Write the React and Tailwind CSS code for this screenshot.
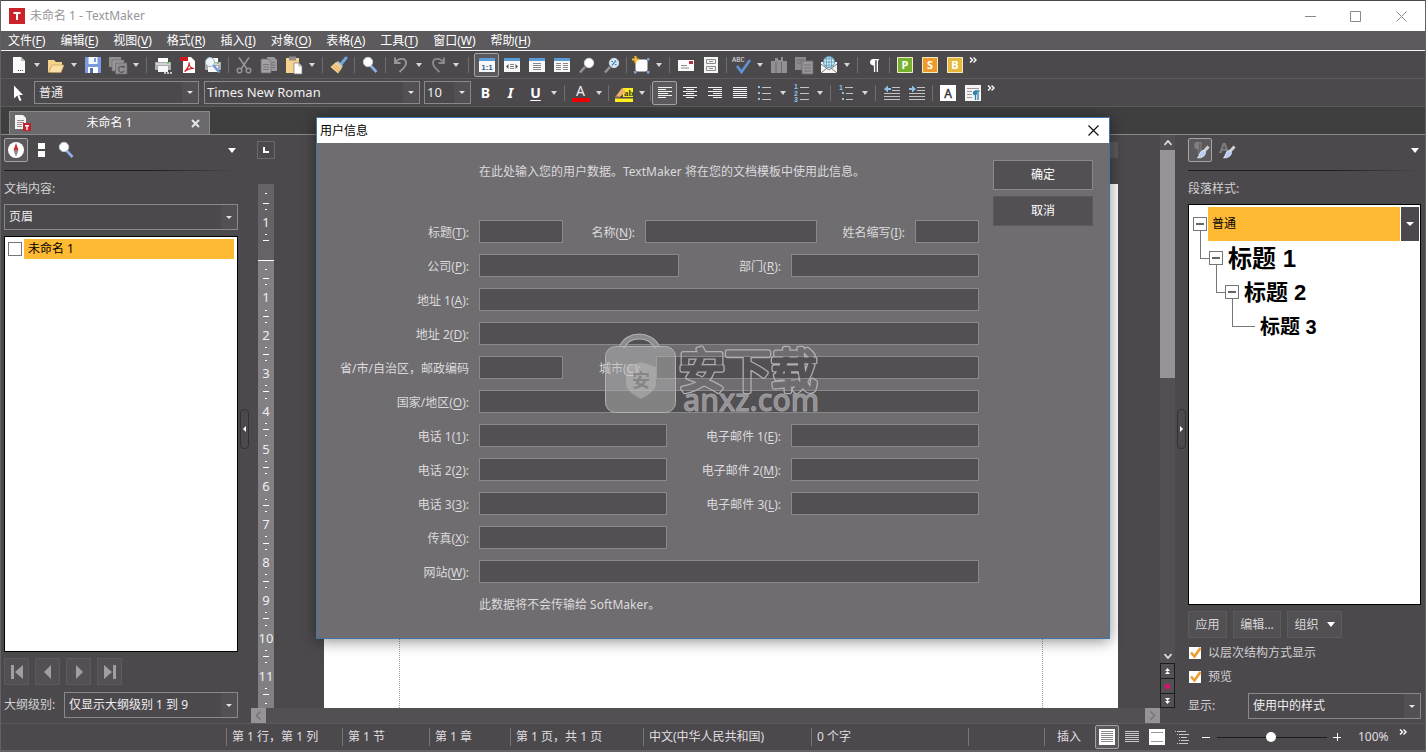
import React from "react";

/* ---------- shared pieces ---------- */

function Svg({ children, w = 20, h = 20, className = "" }) {
  return (
    <svg width={w} height={h} viewBox={`0 0 ${w} ${h}`} fill="none" className={className} aria-hidden="true">
      {children}
    </svg>
  );
}

function Mnemonic({ text }) {
  const m = text.match(/^(.*\()(\w)(\).*)$/);
  if (!m) return text;
  return (
    <>
      {m[1]}
      <span className="underline underline-offset-2">{m[2]}</span>
      {m[3]}
    </>
  );
}

function Tool({ label, active, children }) {
  return (
    <button
      type="button"
      aria-label={label}
      className={
        "flex h-6 w-[25px] shrink-0 items-center justify-center " +
        (active ? "rounded-xs border border-[#a5a3a5] bg-[#5b595c]" : "")
      }
    >
      {children}
    </button>
  );
}

function Caret() {
  return (
    <Svg w={6} h={4}>
      <path d="M0 0h6L3 4z" fill="#d8d6d8" />
    </Svg>
  );
}

function DropArrow({ label = "更多选项" }) {
  return (
    <button type="button" aria-label={label} className="flex h-6 w-3 shrink-0 items-center justify-center">
      <Caret />
    </button>
  );
}

function Sep({ wide, xl, thin }) {
  return (
    <span
      className={
        "flex h-4 shrink-0 justify-center " + (xl ? "w-3" : wide ? "w-2" : thin ? "w-1" : "w-1.5")
      }
    >
      <span className="w-px bg-[#6e6c6f]" />
    </span>
  );
}

function Select({ label, id, options, className = "", size = "text-xs", pad = "pl-1" }) {
  return (
    <span className={"relative flex " + className}>
      <select
        id={id}
        aria-label={label}
        className={
          "h-full w-full appearance-none border border-[#8a888b] bg-[#4b494c] pr-5 text-[#f0eef0] outline-none " +
          size + " " + pad
        }
      >
        {options.map((o) => (
          <option key={o}>{o}</option>
        ))}
      </select>
      <span className="pointer-events-none absolute inset-y-px right-px flex w-4 items-center justify-center bg-[#525053]">
        <Svg w={6} h={3}>
          <path d="M0 0h6L3 3z" fill="#e4e2e4" />
        </Svg>
      </span>
    </span>
  );
}

function More() {
  return (
    <button type="button" aria-label="更多按钮" className="flex h-4 w-3 shrink-0 items-start justify-center">
      <Svg w={8} h={7}>
        <path d="M1 .5 3.500 3 1 5.500M4.500 .5 7 3 4.500 5.500" stroke="#fff" strokeWidth="1.400" />
      </Svg>
    </button>
  );
}

/* ---------- icons ---------- */

const IconNew = () => (
  <Svg>
    <path d="M4 2h8l4 4v12H4z" fill="#fafafa" />
    <path d="M12 2v4h4z" fill="#b9b9bb" />
    <path d="M9 15.500h1M11 15.500h1M13 15.500h1" stroke="#444" />
  </Svg>
);
const IconOpen = () => (
  <Svg>
    <path d="M2 5h6l2 2h6v3H6l-3 7H2z" fill="#f7d28b" />
    <path d="M6 10h12l-3 7.500H2.500z" fill="#fbdfa8" stroke="#c79a49" strokeWidth=".6" />
  </Svg>
);
const IconSave = () => (
  <Svg>
    <path d="M2 2h16v16H2z" fill="#7a9be0" />
    <path d="M5.500 2h9v7h-9z" fill="#f4f6fb" />
    <path d="M5 12h10v6H5z" fill="#fff" />
    <path d="M7 13h3v5H7z" fill="#4d6eb5" />
    <path d="M11 3h2v4h-2z" fill="#7a9be0" />
  </Svg>
);
const IconSaveAll = () => (
  <Svg>
    <path d="M1 2h12v10H1z" fill="#918f92" />
    <path d="M4 5h12v11H4z" fill="#9a989b" stroke="#6b696c" strokeWidth=".7" />
    <path d="M7.500 8h11.500v11H7.500z" fill="#918f92" stroke="#6b696c" strokeWidth=".7" />
    <path d="M15.500 12a3 3 0 1 0 .8 3.500M16 10.500v2h-2" stroke="#5c5a5d" strokeWidth="1.200" />
  </Svg>
);
const Printer = () => (
  <>
    <path d="M5 3h10v5H5z" fill="#fff" />
    <path d="M2 7h16v8H2z" fill="#a9adb0" />
    <path d="M3 9h14" stroke="#dfe2e4" strokeWidth="1.500" />
    <path d="M5 11h10v6H5z" fill="#f7f7f7" />
    <path d="M14 8h2" stroke="#5cc64f" strokeWidth="1.500" />
  </>
);
const IconPrint = () => (
  <Svg>
    <Printer />
    <path d="M11 18h2M14 18h2M17 18h2" stroke="#eee" strokeWidth="1.500" />
  </Svg>
);
const IconPdf = () => (
  <Svg>
    <path d="M5 2h8l4 4v12H5z" fill="#fff" />
    <path d="M2 2h8v4H2z" fill="#d3191f" />
    <path d="M6.500 16.500c3-2 5-7 4.500-9 0 4 2.500 6 5 6-4-.5-6.500.5-9.500 3z" stroke="#d3191f" strokeWidth="1.200" />
  </Svg>
);
const IconPreview = () => (
  <Svg>
    <Printer />
    <circle cx="7" cy="7" r="4.500" fill="#eef5fb" stroke="#9ab0c4" />
    <path d="m10.500 10.500 6 7" stroke="#6a9bd6" strokeWidth="2.500" />
  </Svg>
);
const IconCut = () => (
  <Svg>
    <path d="M5 2.500 13 14M15 2.500 7 14" stroke="#969496" strokeWidth="1.600" />
    <circle cx="5.500" cy="15.500" r="2.300" stroke="#969496" strokeWidth="1.500" />
    <circle cx="14.500" cy="15.500" r="2.300" stroke="#969496" strokeWidth="1.500" />
  </Svg>
);
const IconCopy = () => (
  <Svg>
    <path d="M8 2h7l3 3v11H8z" fill="#99979a" />
    <path d="M2 4h7l3 3v11H2z" fill="#a3a1a4" stroke="#6b696c" strokeWidth=".8" />
    <path d="M4 9.500h6M4 12h6M4 14.500h6M13 7.500h3M13 10h3M13 12.500h3" stroke="#6b696c" strokeWidth=".8" />
  </Svg>
);
const IconPaste = () => (
  <Svg>
    <path d="M2 3h13v15H2z" fill="#f6d28e" />
    <path d="M5 1.500h7v4H5z" fill="#8f8d90" />
    <path d="M10 8h5l3 3v8h-8z" fill="#fff" stroke="#77757a" strokeWidth=".7" />
    <path d="M15 8v3h3" stroke="#999" />
  </Svg>
);
const IconBrush = () => (
  <Svg>
    <path d="m17 3-4.500 5.500" stroke="#6fa8dc" strokeWidth="3" strokeLinecap="round" />
    <path d="m9 6 5 5-1.500 2-5.500-5.500z" fill="#c3c6c9" />
    <path d="M7 7 13 13 9 18.500 1.500 12z" fill="#f6cf92" />
    <path d="m4 11 6 6M6 9.500l5 5.500" stroke="#d99b42" strokeWidth=".8" />
  </Svg>
);
const IconZoom = () => (
  <Svg>
    <path d="m10.500 10.500 6 6.500" stroke="#8fb0e6" strokeWidth="2.600" />
    <circle cx="8" cy="7" r="4.700" fill="#fbfdff" stroke="#c6cbd2" />
  </Svg>
);
const IconUndo = () => (
  <Svg>
    <path d="M4 2.500v5.500h5.500" stroke="#99979a" strokeWidth="1.900" />
    <path d="M4.500 7.500C8 2 15.500 3 15 8.500c-.3 3.500-3.500 5.500-6.500 8.500" stroke="#99979a" strokeWidth="1.900" />
  </Svg>
);
const IconRedo = () => (
  <Svg>
    <path d="M16 2.500v5.500h-5.500" stroke="#8b898c" strokeWidth="1.900" />
    <path d="M15.500 7.500C12 2 4.500 3 5 8.500c.3 3.500 3 5 6.500 8.500" stroke="#8b898c" strokeWidth="1.900" />
  </Svg>
);
const ViewFrame = ({ children }) => (
  <Svg w={16} h={16}>
    <path d="M0 1h16v14H0z" fill="#f8f8f9" />
    <path d="M0 1h16v3H0z" fill="#5b9bd8" />
    {children}
  </Svg>
);
const IconZoomAlt = ({ pct }) => (
  <Svg>
    <path d="m8 12-5 5.500" stroke="#98969a" strokeWidth="2.400" />
    <circle cx="12" cy="8" r="4.700" fill={pct ? "#cfe6f4" : "#fff"} stroke="#d6d6d8" />
    {pct && <path d="m14 5.500-4 5M9.500 6.500H11M13 9.500h1.500" stroke="#3173a8" strokeWidth="1.200" />}
  </Svg>
);
const IconShape = () => (
  <Svg>
    <rect x="4.500" y="4.500" width="12" height="12" rx="2" fill="#fff" />
    <path d="M3 16h2.500v2.500H3zM16 16h2.500v2.500H16zM16 3h2.500v2.500H16z" fill="#7fa6d8" />
    <path d="M4.500 1v7M1 4.500h7" stroke="#f5b932" strokeWidth="2.200" />
  </Svg>
);
const IconEnvelope = () => (
  <Svg>
    <path d="M2 5h16v11H2z" fill="#fbfbfb" />
    <path d="M13 6h4v3h-4z" fill="#bb3340" />
    <path d="M5 10.500h6M5 13h8" stroke="#8b898c" />
  </Svg>
);
const IconFields = () => (
  <Svg>
    <path d="M3 2h14v16H3z" fill="#f5f5f6" />
    <path d="M5.500 4.500h9v4h-9zM5.500 11.500h9v4h-9z" stroke="#8b898c" />
    <path d="M8 6.500h4M8 13.500h4" stroke="#8b898c" />
  </Svg>
);
const IconSpell = () => (
  <Svg w={22}>
    <text x="1" y="7" fontSize="7" fill="#e4e2e4" fontFamily="Liberation Mono, monospace">ABC</text>
    <path d="m6 11 4.500 6L19 5" stroke="#5f93d6" strokeWidth="2.600" />
  </Svg>
);
const IconThesaurus = () => (
  <Svg>
    <path d="M2 6h4V3h3v2h3V2h2v4h4v12H2z" fill="#929093" />
    <path d="M7 7v11M12.500 7v11" stroke="#6b696c" />
  </Svg>
);
const IconCompare = () => (
  <Svg>
    <path d="M1 2h11v13H1z" fill="#8b898c" />
    <path d="M8 6h11v13H8z" fill="#98969a" stroke="#6b696c" strokeWidth=".8" />
    <path d="M3 5h7M3 8h4M10 10h7M10 13h7M10 16h7" stroke="#6b696c" strokeWidth=".8" />
  </Svg>
);
const IconWeb = () => (
  <Svg>
    <path d="M2 7h16v11H2z" fill="#f6f6f7" />
    <path d="m2 9 8 6 8-6M2 18l6-5M18 18l-6-5" stroke="#777" />
    <circle cx="10" cy="7" r="5.500" fill="#d9eefb" stroke="#5b9bb8" />
    <path d="M10 1.500v11M4.500 7h11M6 3.800h8M6 10.200h8M7.500 2v10M12.500 2v10" stroke="#5b9bb8" strokeWidth=".8" />
  </Svg>
);
const IconMark = ({ letter, from, to }) => (
  <Svg w={16} h={16}>
    <path d="M0 0h16v16H0z" fill={to} />
    <path d="M.5.5h15v15H.5z" fill={from} stroke="#f2ecc9" />
    <text x="8" y="12" textAnchor="middle" fontSize="11" fontWeight="700" fill="#fff" fontFamily="Noto Sans, sans-serif">
      {letter}
    </text>
  </Svg>
);
const Lines = ({ rows, color = "#f4f4f5" }) => (
  <Svg w={14} h={14}>
    {rows.map(([a, b], i) => (
      <path key={i} d={`M${a} ${i * 2 + 1.5}H${b}`} stroke={color} />
    ))}
  </Svg>
);
const IconBullets = () => (
  <Svg>
    <path d="M3 3h2v2H3zM3 9h2v2H3zM3 15h2v2H3z" fill="#8cc3ea" />
    <path d="M7 4.500h9M7 10.500h9M7 16.500h9" stroke="#c4c2c5" />
  </Svg>
);
const IconNumbers = () => (
  <Svg>
    <text fontSize="7" fontWeight="700" fill="#8cc3ea" fontFamily="Liberation Sans, sans-serif">
      <tspan x="2" y="6">1</tspan>
      <tspan x="2" y="12.500">2</tspan>
      <tspan x="2" y="19">3</tspan>
    </text>
    <path d="M8 4.500h9M8 10.500h9M8 16.500h9" stroke="#c4c2c5" />
  </Svg>
);
const IconOutline = () => (
  <Svg>
    <text x="2" y="7" fontSize="7" fontWeight="700" fill="#8cc3ea" fontFamily="Liberation Sans, sans-serif">1</text>
    <path d="M5 9h2v2H5zM5 15h2v2H5z" fill="#8cc3ea" />
    <path d="M8 4.500h8M9 10.500h7M9 16.500h7" stroke="#c4c2c5" />
  </Svg>
);
const IconIndent = ({ right }) => (
  <Svg w={16} h={16}>
    <path d="M8 2.500h8M8 5.500h8M0 8.500h16M0 11.500h16M0 14.500h16" stroke="#c4c2c5" />
    {right ? <path d="M0 3h3V.5L7 4 3 7.500V5H0z" fill="#8cc3ea" /> : <path d="M7 3H4V.5L0 4l4 3.500V5h3z" fill="#8cc3ea" />}
  </Svg>
);
const IconFontBox = () => (
  <Svg w={16} h={16}>
    <path d="M0 0h16v16H0z" fill="#fff" />
    <text x="8" y="12.500" textAnchor="middle" fontSize="12" fill="#333" stroke="#333" strokeWidth=".4" fontFamily="Noto Sans, sans-serif">A</text>
  </Svg>
);
const IconParaBox = () => (
  <Svg w={16} h={16}>
    <path d="M0 0h16v16H0z" fill="#f4f4f5" />
    <path d="M2 3.500h12M2 6.500h5M2 9.500h5M2 12.500h5" stroke="#9a989b" />
    <path d="M10.500 6v9M13 6v9M14.500 6H10" stroke="#2f7fb0" strokeWidth="1.300" />
    <circle cx="10" cy="8" r="2.200" fill="#2f7fb0" />
  </Svg>
);
const IconStyleBrush = ({ char }) => (
  <Svg>
    <text x="8" y="13" textAnchor="middle" fontSize="14" fontWeight="700" fill="#7f7d80" fontFamily="Noto Sans, sans-serif">{char}</text>
    <path d="m18.500 6.500-5.500 6" stroke="#cfd1d4" strokeWidth="3" />
    <path d="M12.500 10.500c2 0 3 1 3 3-1 3-4 4.500-8 4.500 2-2 2-6.500 5-7.500z" fill="#b9cdf3" stroke="#eef3fc" strokeWidth=".7" />
  </Svg>
);

/* ---------- top of the window ---------- */

function TitleBar() {
  return (
    <header className="flex h-[31px] shrink-0 items-center border-t border-[#4a484b] bg-white pl-2 text-[#979597]">
      <span className="flex size-4 items-center justify-center bg-[#cc2229]">
        <Svg w={16} h={16}>
          <path d="M4.500 4h7v2H9v6H7V6H4.500z" fill="#fff" />
        </Svg>
      </span>
      <h1 className="ml-[5px] flex-1 text-xs">未命名 1 - TextMaker</h1>
      <button type="button" aria-label="最小化" className="flex h-full w-[45px] items-center justify-center">
        <Svg w={11} h={11}><path d="M0 5.500h11" stroke="#8a8a8a" /></Svg>
      </button>
      <button type="button" aria-label="最大化" className="flex h-full w-[45px] items-center justify-center">
        <Svg w={11} h={11}><path d="M.5.5h10v10H.5z" stroke="#8a8a8a" /></Svg>
      </button>
      <button type="button" aria-label="关闭" className="flex h-full w-[47px] items-center justify-center">
        <Svg w={11} h={11}><path d="m.5.5 10 10M10.500.5l-10 10" stroke="#8a8a8a" /></Svg>
      </button>
    </header>
  );
}

const MENUS = ["文件(F)", "编辑(E)", "视图(V)", "格式(R)", "插入(I)", "对象(O)", "表格(A)", "工具(T)", "窗口(W)", "帮助(H)"];

function MenuBar() {
  return (
    <nav className="flex h-5 shrink-0 items-center gap-[15px] border-b border-[#f4f4f4] bg-[#5c5a5d] pl-[7px] text-xs text-white">
      {MENUS.map((m) => (
        <button type="button" key={m}>
          <Mnemonic text={m} />
        </button>
      ))}
    </nav>
  );
}

function StandardBar() {
  return (
    <div role="toolbar" aria-label="标准" className="flex h-7 shrink-0 items-center border-b border-[#5c5a5d] pl-[5px]">
      <Tool label="新建"><IconNew /></Tool>
      <DropArrow />
      <Tool label="打开"><IconOpen /></Tool>
      <DropArrow />
      <Tool label="保存"><IconSave /></Tool>
      <Tool label="全部保存"><IconSaveAll /></Tool>
      <DropArrow />
      <Sep wide />
      <Tool label="打印"><IconPrint /></Tool>
      <Tool label="导出 PDF"><IconPdf /></Tool>
      <Tool label="打印预览"><IconPreview /></Tool>
      <Sep />
      <Tool label="剪切"><IconCut /></Tool>
      <Tool label="复制"><IconCopy /></Tool>
      <Tool label="粘贴"><IconPaste /></Tool>
      <DropArrow />
      <Sep wide />
      <Tool label="格式刷"><IconBrush /></Tool>
      <Sep />
      <Tool label="搜索"><IconZoom /></Tool>
      <Sep />
      <Tool label="撤消"><IconUndo /></Tool>
      <DropArrow />
      <Tool label="恢复"><IconRedo /></Tool>
      <DropArrow />
      <Sep xl />
      <Tool label="实际大小" active>
        <ViewFrame>
          <text x="8" y="12.500" textAnchor="middle" fontSize="8" fontWeight="700" fill="#2b5f96" fontFamily="Liberation Sans, sans-serif">1:1</text>
        </ViewFrame>
      </Tool>
      <Tool label="页宽">
        <ViewFrame><path d="M4.500 7v5L2 9.500zM11.500 7v5L14 9.500z" fill="#555" /><path d="M6 7.500h4M6 9.500h4M6 11.500h4" stroke="#888" /></ViewFrame>
      </Tool>
      <Tool label="整页">
        <ViewFrame><path d="M4 6.500h8M4 8.500h8M4 10.500h8M4 12.500h8" stroke="#888" /></ViewFrame>
      </Tool>
      <Tool label="双页">
        <ViewFrame><path d="M2 6.500h5M2 8.500h5M2 10.500h5M2 12.500h5M9 6.500h5M9 8.500h5M9 10.500h5M9 12.500h5" stroke="#888" /></ViewFrame>
      </Tool>
      <Tool label="放大镜"><IconZoomAlt /></Tool>
      <Tool label="缩放比例"><IconZoomAlt pct /></Tool>
      <Sep thin />
      <Tool label="插入框架"><IconShape /></Tool>
      <DropArrow />
      <Sep wide />
      <Tool label="信封"><IconEnvelope /></Tool>
      <Tool label="标签"><IconFields /></Tool>
      <Sep />
      <Tool label="拼写检查"><IconSpell /></Tool>
      <DropArrow />
      <Tool label="同义词库"><IconThesaurus /></Tool>
      <Tool label="比较"><IconCompare /></Tool>
      <Tool label="发送"><IconWeb /></Tool>
      <DropArrow />
      <Sep wide />
      <Tool label="段落标记">
        <Svg>
          <path d="M9 4h6v1.200h-1V17h-1.300V5.200h-1.500V17H9.900v-6.500C7.500 10.500 6 9.300 6 7.300S7.500 4 9 4z" fill="#fff" />
        </Svg>
      </Tool>
      <Sep />
      <Tool label="PlanMaker"><IconMark letter="P" from="#76b22f" to="#5a9320" /></Tool>
      <Tool label="SoftMaker"><IconMark letter="S" from="#f09a2a" to="#e07f10" /></Tool>
      <Tool label="BasicMaker"><IconMark letter="B" from="#e6b93c" to="#d09f20" /></Tool>
      <More />
    </div>
  );
}

const LONG = [0, 14];

function FormatBar() {
  return (
    <div role="toolbar" aria-label="格式" className="flex h-7 shrink-0 items-center border-b border-[#5c5a5d] pl-[5px]">
      <Tool label="选择对象">
        <Svg><path d="M5 2.500v13l3.300-3 2.200 5.500 2-.8-2.300-5.200H14z" fill="#fff" /></Svg>
      </Tool>
      <Select label="段落样式" options={["普通"]} className="ml-[3px] h-[23px] w-[165px]" />
      <Select label="字体" options={["Times New Roman"]} className="ml-[5px] h-[23px] w-[216px]" size="text-[13px]" pad="pl-0.5" />
      <Select label="字号" options={["10"]} className="ml-1 h-[23px] w-[47px]" size="text-[13px]" pad="pl-0.5" />
      <span className="ml-0.5 flex">
        <Tool label="粗体"><b className="text-sm text-white">B</b></Tool>
        <Tool label="斜体"><b className="text-sm text-white italic">I</b></Tool>
        <Tool label="下划线"><b className="text-sm text-white underline underline-offset-2">U</b></Tool>
      </span>
      <DropArrow />
      <Sep wide />
      <Tool label="字体颜色">
        <span className="flex flex-col items-center">
          <span className="text-sm leading-[14px] text-[#f0eef0]">A</span>
          <span className="h-1 w-[18px] bg-[#ee0000]" />
        </span>
      </Tool>
      <DropArrow />
      <Sep />
      <Tool label="突出显示">
        <Svg>
          <path d="M1 15.500h18V19H1zM9 5h10v9H9z" fill="#fdf01c" />
          <path d="M2 13 8 5l4 3-6 6z" fill="#eeb668" />
          <path d="m2 12-1 2.500h5z" fill="#b98445" />
          <text x="10" y="12.500" fontSize="9" fontWeight="700" fill="#3a3a20" fontFamily="Liberation Serif, serif">ab</text>
        </Svg>
      </Tool>
      <DropArrow />
      <Sep thin />
      <Tool label="左对齐" active><Lines rows={[LONG, [0, 8], LONG, [0, 10], LONG, [0, 8]]} /></Tool>
      <Tool label="居中"><Lines rows={[LONG, [3, 11], LONG, [3, 11], LONG, [3, 11]]} /></Tool>
      <Tool label="右对齐"><Lines rows={[LONG, [5, 14], LONG, [5, 14], LONG, [5, 14]]} /></Tool>
      <Tool label="两端对齐"><Lines rows={[LONG, LONG, LONG, LONG, LONG, LONG]} /></Tool>
      <Tool label="项目符号"><IconBullets /></Tool>
      <DropArrow />
      <Tool label="编号"><IconNumbers /></Tool>
      <DropArrow />
      <Sep wide />
      <Tool label="多级列表"><IconOutline /></Tool>
      <DropArrow />
      <Sep wide />
      <Tool label="减少缩进"><IconIndent /></Tool>
      <Tool label="增加缩进"><IconIndent right /></Tool>
      <Sep />
      <Tool label="字符格式"><IconFontBox /></Tool>
      <Tool label="段落格式"><IconParaBox /></Tool>
      <More />
    </div>
  );
}

function TabStrip() {
  return (
    <div className="flex h-7 shrink-0 items-end border-b border-[#8a888b] bg-[#403f40] pl-2">
      <div className="flex h-[23px] w-[201px] items-center border border-b-0 border-[#8a888b] bg-[#6b696c] pr-2 pl-1 text-xs text-white">
        <Svg w={18} h={18}>
          <path d="M1 1h8l3 3v11H1z" fill="#f4f4f5" />
          <path d="M3 6.500h7M3 8.500h7M3 10.500h5M3 12.500h5" stroke="#9a8a8c" />
          <path d="M9 9h8v8H9z" fill="#c4222a" />
          <path d="M11 11h4v1.500h-1.300V16h-1.400v-3.500H11z" fill="#fff" />
        </Svg>
        <span className="flex-1 pr-1 text-center">未命名 1</span>
        <button type="button" aria-label="关闭文档" className="flex size-2.5 items-center">
          <Svg w={9} h={9}><path d="m1 1 7 7M8 1 1 8" stroke="#e6e6e6" strokeWidth="2" /></Svg>
        </button>
      </div>
    </div>
  );
}

/* ---------- left side ---------- */

function SideButton({ label, children, active }) {
  return (
    <button
      type="button"
      aria-label={label}
      className={
        "flex size-6 items-center justify-center " +
        (active ? "rounded-xs border border-[#a5a3a5] bg-[#5b595c]" : "")
      }
    >
      {children}
    </button>
  );
}

function NavButton({ label, d }) {
  return (
    <button type="button" aria-label={label} className="flex h-[27px] w-[25px] items-center justify-center border border-[#5c5a5d] bg-[#525053]">
      <Svg w={14} h={14}><path d={d} fill="#a09ea1" /></Svg>
    </button>
  );
}

function LeftPanel() {
  return (
    <aside className="flex w-[237px] shrink-0 flex-col pt-[3px] pb-[5px] pl-[3px]">
      <div className="flex items-center gap-px">
        <SideButton label="导航" active>
          <Svg>
            <circle cx="10" cy="10" r="8" fill="#fff" />
            <path d="m10 3 2.500 7h-5z" fill="#cf3038" />
            <path d="m10 17 2.500-7h-5z" fill="#8b898c" />
          </Svg>
        </SideButton>
        <SideButton label="页面"><Svg><path d="M7 3h7v6H7zM7 11h7v6H7z" fill="#fff" /></Svg></SideButton>
        <SideButton label="搜索"><IconZoom /></SideButton>
        <button type="button" aria-label="面板菜单" className="ml-auto p-0.5"><Svg w={8} h={5}><path d="M0 0h8L4 5z" fill="#fff" /></Svg></button>
      </div>
      <div className="mt-2 h-px bg-linear-to-r from-[#1e1d1e] from-60% to-[#4b494c]" />
      <label htmlFor="content" className="mt-2 text-xs leading-5 text-[#d2d0d3]">文档内容:</label>
      <Select id="content" options={["页眉"]} className="mt-[5px] h-[26px]" />
      <ul className="mt-1.5 min-h-0 flex-1 border border-black bg-white px-[3px] py-0.5">
        <li className="flex items-center">
          <input id="doc1" type="checkbox" className="size-3.5 appearance-none border border-[#777] bg-white" />
          <label htmlFor="doc1" className="ml-0.5 h-5 flex-1 bg-[#ffba33] pl-1 text-xs leading-5 text-black">未命名 1</label>
        </li>
      </ul>
      <div className="mt-1.5 flex gap-1.5">
        <NavButton label="第一个" d="M1 0h3v14H1zM13 0v14L5 7z" />
        <NavButton label="上一个" d="M10 0v14L3 7z" />
        <NavButton label="下一个" d="M4 0v14l7-7z" />
        <NavButton label="最后一个" d="M10 0h3v14h-3zM1 0v14l8-7z" />
      </div>
      <div className="mt-[7px] flex items-center">
        <label htmlFor="level" className="w-[60px] text-xs text-[#d2d0d3]">大纲级别:</label>
        <Select id="level" options={["仅显示大纲级别 1 到 9"]} className="h-[26px] flex-1" />
      </div>
    </aside>
  );
}

function Splitter({ flip }) {
  return (
    <div className="flex w-[13px] shrink-0 items-center justify-center">
      <button type="button" aria-label="折叠面板" className="flex h-10 w-[9px] items-center justify-center rounded-sm border border-[#333134]">
        <Svg w={3} h={6}>
          <path d={flip ? "M0 0v6l3-3z" : "M3 0v6L0 3z"} fill="#fff" />
        </Svg>
      </button>
    </div>
  );
}

/* ---------- document area ---------- */

const Dot = () => <span className="h-px w-0.5 bg-white" />;
const Dash = () => <span className="h-px w-1.5 bg-white" />;

function RulerCell({ n }) {
  return (
    <div className="flex flex-1 flex-col items-center justify-between">
      <Dash />
      <Dot />
      <span className="text-[13px] leading-[14px]">{n}</span>
      <Dot />
      <span />
    </div>
  );
}

function VerticalRuler() {
  return (
    <div className="mt-[25px] ml-[7px] flex min-h-0 w-4 flex-1 flex-col overflow-hidden text-[#f0eef0]">
      <div className="flex h-[76px] shrink-0 flex-col items-center bg-[#656366] pt-[9px]">
        <Dot />
        <div className="flex h-[46px] pt-[9px]"><RulerCell n={1} /></div>
        <Dash />
        <div className="pt-2"><Dot /></div>
      </div>
      <div className="h-px shrink-0 bg-white" />
      <div className="flex min-h-0 flex-1 flex-col overflow-hidden bg-[#828083]">
        <div className="flex h-[17px] shrink-0 flex-col items-center pt-2"><Dot /></div>
        <div className="flex h-[416px] shrink-0 flex-col">
          {[1, 2, 3, 4, 5, 6, 7, 8, 9, 10, 11].map((n) => (
            <RulerCell key={n} n={n} />
          ))}
        </div>
        <div className="flex shrink-0 flex-col items-center gap-2">
          <Dash />
          <Dot />
        </div>
      </div>
    </div>
  );
}

function DocumentArea() {
  return (
    <main className="flex min-w-0 flex-1 flex-col">
      <div className="flex min-h-0 flex-1">
        <div className="flex w-6 shrink-0 flex-col pt-1.5">
          <button type="button" aria-label="制表位类型" className="ml-1.5 flex size-[18px] items-center justify-center border border-[#6b696c]">
            <Svg w={6} h={6}><path d="M0 0h2v4h4v2H0z" fill="#fff" /></Svg>
          </button>
          <VerticalRuler />
        </div>
        <div className="flex min-w-0 flex-1 flex-col pr-[42px] pl-[49px]">
          <div className="mt-[7px] h-4 shrink-0 bg-[#5c5a5d]" />
          <div className="mt-[26px] flex-1 bg-white px-[75px] pt-[75px]">
            <div className="h-full border border-b-0 border-dotted border-[#a0a0a0]" />
          </div>
        </div>
        <VerticalScroll />
      </div>
      <div className="mr-[15px] flex h-[15px] shrink-0 justify-between bg-[#525053]">
        <button type="button" aria-label="向左滚动" className="flex w-[15px] items-center justify-center bg-[#969497]">
          <Svg w={7} h={9}><path d="M5.500.5 1.500 4.500l4 4" stroke="#77757a" strokeWidth="1.600" /></Svg>
        </button>
        <button type="button" aria-label="向右滚动" className="flex w-[15px] items-center justify-center bg-[#969497]">
          <Svg w={7} h={9}><path d="m1.500.5 4 4-4 4" stroke="#77757a" strokeWidth="1.600" /></Svg>
        </button>
      </div>
    </main>
  );
}

function ScrollStep({ label, children }) {
  return (
    <button type="button" aria-label={label} className="flex h-[15px] items-center justify-center border border-b-0 border-[#1e1d1e] last:border-b">
      {children}
    </button>
  );
}

function VerticalScroll() {
  return (
    <div className="flex w-[15px] shrink-0 flex-col bg-[#525053]">
      <button type="button" aria-label="向上滚动" className="flex h-[15px] items-center justify-center">
        <Svg w={8} h={6}><path d="m.5 5 3.500-4 3.500 4" stroke="#e0dee0" strokeWidth="1.800" /></Svg>
      </button>
      <div className="h-[228px] bg-[#969497]" />
      <button type="button" aria-label="向下滚动" className="mt-auto flex h-[15px] items-center justify-center">
        <Svg w={8} h={6}><path d="m.5 1 3.500 4 3.500-4" stroke="#e0dee0" strokeWidth="1.800" /></Svg>
      </button>
      <ScrollStep label="上一页"><Svg w={7} h={7}><path d="M3.500 0 6 3H1zM3.500 3 6 6H1z" fill="#fff" /></Svg></ScrollStep>
      <ScrollStep label="浏览对象"><Svg w={7} h={7}><circle cx="3.500" cy="3.500" r="2.800" fill="#d4156f" /></Svg></ScrollStep>
      <ScrollStep label="下一页"><Svg w={7} h={7}><path d="M3.500 7 6 4H1zM3.500 4 6 1H1z" fill="#fff" /></Svg></ScrollStep>
    </div>
  );
}

/* ---------- right side ---------- */

function Toggle() {
  return (
    <button type="button" aria-label="折叠" className="flex size-3.5 shrink-0 items-center justify-center border border-[#777] bg-white">
      <span className="h-0.5 w-2 bg-[#666]" />
    </button>
  );
}

function StyleRow({ indent, leaf, children }) {
  return (
    <li className="flex h-[34px]">
      <span className={"h-[18px] shrink-0 border-b border-l border-[#777] " + indent + (leaf ? " w-[23px]" : " w-[9px]")} />
      {!leaf && (
        <span className="flex w-3.5 flex-col pt-2.5">
          <Toggle />
          <span className="ml-[7px] w-px flex-1 bg-[#777]" />
        </span>
      )}
      <span className="flex items-center pt-0.5 pl-[5px] font-bold text-black">{children}</span>
    </li>
  );
}

function CheckRow({ id, children }) {
  return (
    <div className="flex h-6 items-center">
      <span className="relative flex">
        <input id={id} type="checkbox" defaultChecked className="peer size-3 appearance-none bg-white" />
        <Svg w={13} h={12} className="pointer-events-none absolute top-0 left-0 hidden peer-checked:block">
          <path d="M2 5.500 5.500 9.500 11.500 1" stroke="#ee9a2c" strokeWidth="2.600" />
        </Svg>
      </span>
      <label htmlFor={id} className="ml-[7px] text-xs text-[#d2d0d3]">{children}</label>
    </div>
  );
}

const PANEL_BUTTON = "flex h-[27px] items-center justify-center border border-[#5c5a5d] bg-[#525053] text-xs text-[#d8d6d9] ";

function RightPanel() {
  return (
    <aside className="flex w-[237px] shrink-0 flex-col pt-[3px] pr-1 pb-1">
      <div className="flex items-center">
        <SideButton label="段落样式" active><IconStyleBrush char="¶" /></SideButton>
        <span className="ml-0.5 flex"><SideButton label="字符样式"><IconStyleBrush char="A" /></SideButton></span>
        <button type="button" aria-label="面板菜单" className="ml-auto p-0.5"><Svg w={8} h={5}><path d="M0 0h8L4 5z" fill="#fff" /></Svg></button>
      </div>
      <div className="mt-2 h-px bg-linear-to-r from-[#1e1d1e] from-60% to-[#4b494c]" />
      <h2 className="mt-2 text-xs leading-5 text-[#d2d0d3]">段落样式:</h2>
      <ul className="mt-[5px] min-h-0 flex-1 border border-black bg-white py-0.5 pr-px pl-1 font-['Liberation_Sans','Noto_Sans_CJK_SC',sans-serif]">
        <li className="flex h-[34px]">
          <span className="flex w-3.5 flex-col pt-2.5">
            <Toggle />
            <span className="ml-[7px] w-px flex-1 bg-[#777]" />
          </span>
          <span className="ml-px flex flex-1 items-center bg-[#ffba33] pl-1 text-xs text-black">普通</span>
          <button type="button" aria-label="样式菜单" className="ml-px flex w-[18px] items-center justify-center bg-[#4b494c]">
            <Svg w={8} h={4}><path d="M0 0h8L4 4z" fill="#fff" /></Svg>
          </button>
        </li>
        <StyleRow indent="ml-[7px]"><span className="text-2xl leading-8">标题 1</span></StyleRow>
        <StyleRow indent="ml-[23px]"><span className="text-[22px] leading-8">标题 2</span></StyleRow>
        <StyleRow indent="ml-[39px]" leaf><span className="text-xl leading-8">标题 3</span></StyleRow>
      </ul>
      <div className="mt-1.5 flex gap-1.5">
        <button type="button" className={PANEL_BUTTON + "w-[39px]"}>应用</button>
        <button type="button" className={PANEL_BUTTON + "w-12"}>编辑...</button>
        <button type="button" className={PANEL_BUTTON + "w-[55px] gap-2"}>
          组织
          <Svg w={8} h={5}><path d="M0 0h8L4 5z" fill="#fff" /></Svg>
        </button>
      </div>
      <div className="mt-[3px] pl-px">
        <CheckRow id="tree">以层次结构方式显示</CheckRow>
        <CheckRow id="preview">预览</CheckRow>
      </div>
      <div className="mt-1 flex items-center">
        <label htmlFor="show" className="w-[60px] text-xs text-[#d2d0d3]">显示:</label>
        <Select id="show" options={["使用中的样式"]} className="h-[26px] flex-1" />
      </div>
    </aside>
  );
}

/* ---------- status bar ---------- */

function StatusCell({ w, children }) {
  return <span className={"flex h-[18px] items-center border-l border-[#77757a] " + w}>{children}</span>;
}

function StatusBar() {
  return (
    <footer className="flex h-[27px] shrink-0 items-center border-t border-[#5c5a5d] pl-[225px] text-xs text-[#e0dee1]">
      <StatusCell w="w-[116px] pl-[5px]">第 1 行，第 1 列</StatusCell>
      <StatusCell w="w-[87px] pl-[5px]">第 1 节</StatusCell>
      <StatusCell w="w-[81px] pl-[5px]">第 1 章</StatusCell>
      <StatusCell w="w-[133px] pl-[5px]">第 1 页，共 1 页</StatusCell>
      <StatusCell w="w-[168px] pl-[5px]">中文(中华人民共和国)</StatusCell>
      <StatusCell w="flex-1 pl-[5px]">0 个字</StatusCell>
      <StatusCell w="w-[76px]" />
      <StatusCell w="w-[51px] pl-3">插入</StatusCell>
      <span className="flex gap-px">
        <SideButton label="普通视图" active>
          <Svg w={16} h={16}><path d="M0 0h16v16H0z" fill="#fff" /><path d="M2 2.500h12M2 4.500h12M2 6.500h12M2 8.500h12M2 10.500h12M2 12.500h12" stroke="#8b898c" /></Svg>
        </SideButton>
        <SideButton label="连续视图"><Lines rows={[LONG, LONG, LONG, LONG, LONG, LONG]} color="#c9c7ca" /></SideButton>
        <SideButton label="母版视图">
          <Svg w={16} h={16}><path d="M0 0h16v16H0z" fill="#fff" /><path d="M2 3.500h12M2 12.500h12" stroke="#9a989b" /></Svg>
        </SideButton>
        <SideButton label="大纲视图">
          <Svg w={14} h={14}><path d="M0 1.500h1M2 1.500h9M2 4.500h1M4 4.500h10M4 7.500h1M6 7.500h6M4 10.500h1M6 10.500h8M2 13.500h1M4 13.500h9" stroke="#c9c7ca" /></Svg>
        </SideButton>
      </span>
      <button type="button" aria-label="缩小" className="ml-0.5 flex size-5 items-center justify-center">
        <Svg w={8} h={8}><path d="M0 4.500h8" stroke="#fff" /></Svg>
      </button>
      <input
        type="range"
        aria-label="缩放"
        min="0"
        max="100"
        defaultValue="49"
        className="ml-px h-4 w-[110px] appearance-none bg-[linear-gradient(#1e1d1e,#1e1d1e)] bg-[length:100%_1px] bg-center bg-no-repeat [&::-webkit-slider-thumb]:size-2.5 [&::-webkit-slider-thumb]:appearance-none [&::-webkit-slider-thumb]:rounded-full [&::-webkit-slider-thumb]:bg-white"
      />
      <button type="button" aria-label="放大" className="flex size-5 items-center justify-center">
        <Svg w={8} h={8}><path d="M0 4.500h8M4.500 0v8" stroke="#fff" /></Svg>
      </button>
      <span className="ml-[11px] w-[39px]">100%</span>
      <span className="mr-4 flex"><More /></span>
    </footer>
  );
}

/* ---------- user info dialog ---------- */

function Field({ id, label, labelWidth, width }) {
  return (
    <>
      <label htmlFor={id} className={"shrink-0 pt-0.5 text-right text-xs whitespace-nowrap text-[#dcdadd] " + labelWidth}>
        <Mnemonic text={label} />
      </label>
      <input id={id} type="text" className={"ml-2.5 h-[23px] min-w-0 border border-[#8a888b] bg-[#525053] px-1 text-xs text-white outline-none " + width} />
    </>
  );
}

const FIRST = "w-[152px]";
const ROWS = [
  [["title", "标题(T):", FIRST, "w-[84px]"], ["name", "名称(N):", "w-[72px]", "w-[172px]"], ["initials", "姓名缩写(I):", "w-[88px]", "w-16"]],
  [["company", "公司(P):", FIRST, "w-[200px]"], ["dept", "部门(R):", "w-[102px]", "w-[188px]"]],
  [["addr1", "地址 1(A):", FIRST, "w-[500px]"]],
  [["addr2", "地址 2(D):", FIRST, "w-[500px]"]],
  [["zip", "省/市/自治区，邮政编码", FIRST, "w-[84px]"], ["city", "城市(C):", "w-[83px] pr-[5px]", "w-[323px]"]],
  [["country", "国家/地区(O):", FIRST, "w-[500px]"]],
  [["tel1", "电话 1(1):", FIRST, "w-[188px]"], ["mail1", "电子邮件 1(E):", "w-[114px]", "w-[188px]"]],
  [["tel2", "电话 2(2):", FIRST, "w-[188px]"], ["mail2", "电子邮件 2(M):", "w-[114px]", "w-[188px]"]],
  [["tel3", "电话 3(3):", FIRST, "w-[188px]"], ["mail3", "电子邮件 3(L):", "w-[114px]", "w-[188px]"]],
  [["fax", "传真(X):", FIRST, "w-[188px]"]],
  [["web", "网站(W):", FIRST, "w-[500px]"]],
];

function Watermark() {
  return (
    <svg width="216" height="84" viewBox="0 0 216 84" fill="none" aria-hidden="true" className="pointer-events-none absolute top-[215px] left-[287px]">
      <path d="M18 14C24 0 46 0 53 14" stroke="#b2b0b3" strokeWidth="6" />
      <path d="M18 14C24 0 46 0 53 14" stroke="#8b8a8c" strokeWidth="4" />
      <rect x="1.500" y="13.500" width="70" height="66" rx="10" fill="#b4b3b4" fillOpacity=".5" stroke="#b2b0b3" />
      <path d="m37 29 15 5v16c0 8-8 12-15 16-7-4-15-8-15-16V34z" fill="#c8c7c9" fillOpacity=".4" />
      <text x="37" y="54" textAnchor="middle" fontSize="18" fontWeight="700" fill="#7d7b7e" fillOpacity=".8" fontFamily="Noto Sans CJK SC, sans-serif">安</text>
      <mask id="ring" maskUnits="userSpaceOnUse" x="70" y="0" width="146" height="84">
        <rect x="70" width="146" height="84" fill="#fff" />
        <text x="75" y="54" fontSize="46" fill="#000" stroke="#000" strokeWidth="3" strokeLinejoin="round" fontFamily="Noto Sans CJK SC, sans-serif">安下载</text>
      </mask>
      <text x="75" y="54" fontSize="46" fill="#b0aeb1" stroke="#b0aeb1" strokeWidth="5.500" strokeLinejoin="round" mask="url(#ring)" fontFamily="Noto Sans CJK SC, sans-serif">安下载</text>
      <text x="79" y="78" fontSize="30" fontWeight="500" fill="#929193" stroke="#a6a4a7" strokeWidth=".8" fontFamily="Noto Sans, sans-serif">anxz.com</text>
    </svg>
  );
}

function UserInfoDialog() {
  return (
    <section role="dialog" aria-labelledby="dlg-title" className="relative flex w-[794px] flex-col border border-[#3f75a6] bg-[#6f6d70] shadow-[0_2px_14px_rgba(0,0,0,0.45)]">
      <header className="flex h-[25px] items-center justify-between bg-white pr-2.5 pl-[3px] text-black">
        <h2 id="dlg-title" className="text-xs">用户信息</h2>
        <button type="button" aria-label="关闭对话框" className="flex"><Svg w={11} h={11}><path d="m.5.5 10 10M10.500.5l-10 10" stroke="#111" strokeWidth="1.200" /></Svg></button>
      </header>
      <div className="flex items-start justify-between pt-[17px] pr-4 pb-6">
        <form className="flex flex-col" onSubmit={(e) => e.preventDefault()}>
          <p className="mb-[39px] pt-[3px] pl-[162px] text-xs leading-[18px] text-[#dcdadd]">
            在此处输入您的用户数据。TextMaker 将在您的文档模板中使用此信息。
          </p>
          <div className="flex flex-col gap-[11px]">
            {ROWS.map((row) => (
              <div key={row[0][0]} className="flex items-center">
                {row.map(([id, label, lw, w]) => (
                  <Field key={id} id={id} label={label} labelWidth={lw} width={w} />
                ))}
              </div>
            ))}
          </div>
          <p className="mt-[13px] pl-[162px] text-xs leading-[18px] text-[#dcdadd]">此数据将不会传输给 SoftMaker。</p>
        </form>
        <div className="flex w-[100px] flex-col gap-1.5">
          <button type="button" className="h-[30px] border border-[#8a888b] bg-[#525053] text-xs text-white">确定</button>
          <button type="button" className="h-[30px] border border-[#5c5a5d] bg-[#525053] text-xs text-white">取消</button>
        </div>
      </div>
      <Watermark />
    </section>
  );
}

export default function App() {
  return (
    <div className="relative flex h-screen min-h-[600px] flex-col overflow-hidden border-x border-b-2 border-[#636164] bg-[#4b494c] font-['Noto_Sans','Noto_Sans_CJK_SC',sans-serif]">
      <TitleBar />
      <MenuBar />
      <StandardBar />
      <FormatBar />
      <TabStrip />
      <div className="flex min-h-0 flex-1">
        <LeftPanel />
        <Splitter />
        <DocumentArea />
        <Splitter flip />
        <RightPanel />
      </div>
      <StatusBar />
      <div className="absolute inset-0 flex items-center justify-center pt-1.5">
        <UserInfoDialog />
      </div>
    </div>
  );
}
